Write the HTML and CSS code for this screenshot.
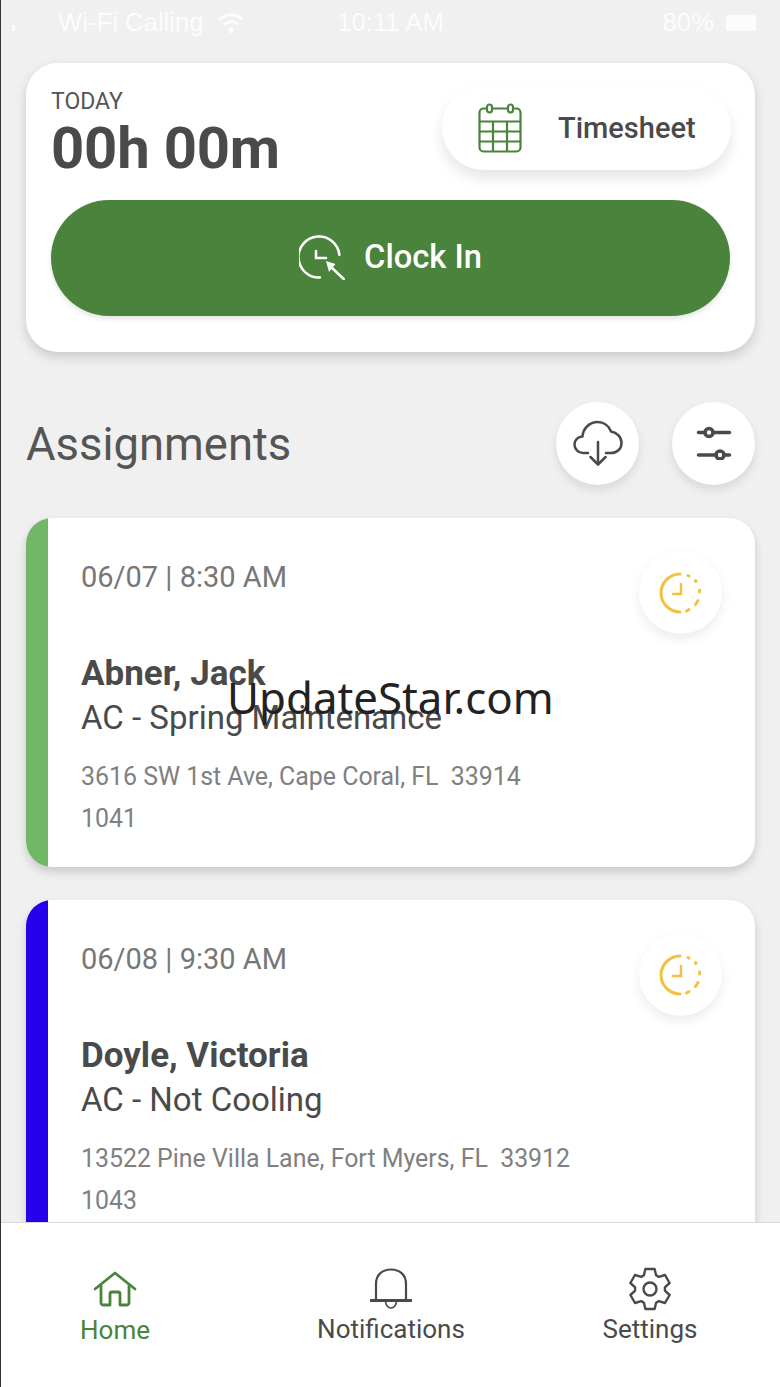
FILE: index.html
```html
<!DOCTYPE html>
<html lang="en">
<head>
<meta charset="utf-8">
<title>Assignments</title>
<link rel="stylesheet" href="styles.css">
</head>
<body>
<div class="app">
  <div class="status">
    <div class="status-left">
      <svg class="signal" width="34" height="12" viewBox="0 0 34 12"><rect x="0" y="6" width="3" height="6" fill="#fff"/></svg>
      <span class="carrier">Wi-Fi Calling</span>
      <svg class="wifi" width="30" height="24" viewBox="0 0 26 22" fill="none" stroke="#fff" stroke-width="2.600"><path d="M2 8 Q13 -1 24 8"/><path d="M6.500 12.500 Q13 7 19.500 12.500"/><path d="M13 21 L9.500 16.500 Q13 14 16.500 16.500 Z" fill="#fff" stroke="none"/></svg>
    </div>
    <span class="time">10:11 AM</span>
    <div class="status-right">
      <span>80%</span>
      <span class="battery"></span>
    </div>
  </div>

  <main class="content">
    <section class="today-card">
      <div class="today-top">
        <div class="today-text">
          <div class="today-label">TODAY</div>
          <div class="today-value">00h 00m</div>
        </div>
        <button class="timesheet">
          <svg width="44" height="50" viewBox="0 0 44 50" fill="none" stroke="#4a833c" stroke-width="2.200"><rect x="1.500" y="5.500" width="41" height="43" rx="4"/><path d="M1.500 18.500H42.500M1.500 28.500H42.500M1.500 38.500H42.500M15 18.500V48.500M29 18.500V48.500"/><rect x="9" y="1.500" width="5" height="8" rx="2.500" fill="#fff"/><rect x="30" y="1.500" width="5" height="8" rx="2.500" fill="#fff"/></svg>
          <span>Timesheet</span>
        </button>
      </div>
      <button class="clock-in">
        <svg width="46" height="46" viewBox="2 0 46 46" fill="none" stroke="#fff" stroke-width="2.500" stroke-linecap="round"><path d="M42.400 21A20.500 20.500 0 1 0 23 43.500"/><path d="M19 17V24H29"/><path d="M33 32L46.700 45"/><path d="M29 27L38.500 30L32 38Z" fill="#fff" stroke="none"/></svg>
        <span>Clock In</span>
      </button>
    </section>

    <div class="section-head">
      <h1>Assignments</h1>
      <div class="head-actions">
        <button class="round-btn">
          <svg width="50" height="46" viewBox="0 0 50 46" fill="none" stroke="#4a4a4a" stroke-width="2.500" stroke-linecap="round" stroke-linejoin="round"><path d="M15 33H10C5 33 1.500 29 1.500 24.500C1.500 20 5 16.500 9.500 16.500C10 8.500 16.500 2 24.500 2C31 2 36 6 38 11.500C44 12.500 48.500 17 48.500 23C48.500 29 44 33 38 33H33"/><path d="M25 22V44"/><path d="M17.500 37L25 44.500L32.500 37"/></svg>
        </button>
        <button class="round-btn">
          <svg width="36" height="34" viewBox="0 0 36 34" fill="none" stroke="#4a4a4a" stroke-width="3.600" stroke-linecap="round"><path d="M2.500 6.500H33.500M2.500 29H33.500" /><circle cx="13" cy="6.500" r="4" fill="#fff"/><circle cx="24" cy="29" r="4" fill="#fff"/></svg>
        </button>
      </div>
    </div>

    <article class="job job-green">
      <div class="job-bar"></div>
      <div class="job-body">
        <div class="job-date">06/07 | 8:30 AM</div>
        <div class="job-name">Abner, Jack</div>
        <div class="job-type">AC - Spring Maintenance</div>
        <div class="job-addr">3616 SW 1st Ave, Cape Coral, FL&nbsp; 33914</div>
        <div class="job-id">1041</div>
      </div>
      <button class="status-btn">
        <svg width="44" height="44" viewBox="0 0 44 44" fill="none" stroke="#f2c13f" stroke-width="3" stroke-linecap="round"><path d="M21 3A19 19 0 0 0 21 41"/><path d="M29 4.500L30 5M36.500 9.500L37 10.500M40.500 19V21M39 29.500L36.500 33.500M30 38.500L27.500 40"/><path d="M22 13V23H14" stroke-width="2.500"/></svg>
      </button>
    </article>

    <article class="job job-blue">
      <div class="job-bar"></div>
      <div class="job-body">
        <div class="job-date">06/08 | 9:30 AM</div>
        <div class="job-name">Doyle, Victoria</div>
        <div class="job-type">AC - Not Cooling</div>
        <div class="job-addr">13522 Pine Villa Lane, Fort Myers, FL&nbsp; 33912</div>
        <div class="job-id">1043</div>
      </div>
      <button class="status-btn">
        <svg width="44" height="44" viewBox="0 0 44 44" fill="none" stroke="#f2c13f" stroke-width="3" stroke-linecap="round"><path d="M21 3A19 19 0 0 0 21 41"/><path d="M29 4.500L30 5M36.500 9.500L37 10.500M40.500 19V21M39 29.500L36.500 33.500M30 38.500L27.500 40"/><path d="M22 13V23H14" stroke-width="2.500"/></svg>
      </button>
    </article>
  </main>

  <nav class="tabbar">
    <a class="tab tab-active">
      <svg width="44" height="36" viewBox="0 0 44 36" fill="none" stroke="#4a833c" stroke-width="2.800" stroke-linecap="round" stroke-linejoin="round"><path d="M2 18L22 2L42 18"/><path d="M8 15V32C8 33 9 34 10 34H17V23C17 21.500 18 21 19 21H25C26 21 27 21.500 27 23V34H34C35 34 36 33 36 32V15"/></svg>
      <span>Home</span>
    </a>
    <a class="tab">
      <svg width="42" height="42" viewBox="0 0 42 42" fill="none" stroke="#4a4a4a" stroke-width="2.200" stroke-linecap="round"><path d="M6 32V16C6 7 12 1.500 21 1.500C30 1.500 36 7 36 16V32"/><path d="M1 32.500H41" stroke-width="3"/><path d="M15.500 33C15.500 37 18 40 21 40C24 40 26.500 37 26.500 33" stroke-width="1.600"/></svg>
      <span>Notifications</span>
    </a>
    <a class="tab">
      <svg width="44" height="44" viewBox="0 0 44 44" fill="none" stroke="#4a4a4a" stroke-width="2.400" stroke-linejoin="round"><circle cx="22" cy="22" r="6.500"/><path d="M15.900 8.300L17.400 2H26.600L28.100 8.300L30.800 9.900L37 8L41.600 16L36.900 20.400V23.600L41.600 28L37 36L30.800 34.100L28.100 35.700L26.600 42H17.400L15.900 35.700L13.200 34.100L7 36L2.400 28L7.100 23.600V20.400L2.400 16L7 8L13.200 9.900Z"/></svg>
      <span>Settings</span>
    </a>
  </nav>

  <div class="watermark">UpdateStar.com</div>
</div>
</body>
</html>
```
FILE: styles.css
```css
* { box-sizing: border-box; }
html, body { margin: 0; padding: 0; }
body { width: 780px; height: 1387px; overflow: hidden; font-family: Roboto, sans-serif; color: #4a4a4a; }
button { font: inherit; color: inherit; border: 0; padding: 0; background: #fff; }

.app { position: relative; width: 780px; height: 1387px; background: #f0f0f0; border-left: 1px solid #333; overflow: hidden; display: flex; flex-direction: column; }

.status { flex: none; height: 45px; display: grid; grid-template-columns: 1fr auto 1fr; align-items: center; color: #fff; font-family: "Liberation Sans", sans-serif; font-size: 25.7px; opacity: .85; }
.status-left { display: flex; align-items: center; padding-left: 11px; }
.signal { margin-top: 4px; }
.carrier { margin-left: 12px; }
.wifi { margin-left: 12px; }
.status-right { display: flex; justify-content: flex-end; align-items: center; gap: 12px; padding-right: 24px; }
.battery { width: 30px; height: 16px; background: #fff; border-radius: 2px; }

.content { flex: 1; min-height: 0; padding: 18px 25px 0; overflow: hidden; display: flex; flex-direction: column; }

.today-card { flex: none; height: 289px; background: #fff; border-radius: 32px; box-shadow: 0 5px 12px rgba(0,0,0,.16); padding: 23px 24px 0 25px; }
.today-top { display: flex; justify-content: space-between; height: 114px; }
.today-text { padding-top: 4px; }
.today-label { font-size: 23px; line-height: 24px; color: #555; }
.today-value { font-size: 58px; font-weight: 700; line-height: 68px; color: #4a4a4a; letter-spacing: -.2px; }
.timesheet { width: 289px; height: 84px; border-radius: 42px; display: flex; align-items: center; box-shadow: 0 8px 14px rgba(0,0,0,.1); padding-left: 36px; font-size: 29px; font-weight: 500; gap: 36px; }
.clock-in { width: 679px; height: 116px; border-radius: 58px; background: #4a833c; color: #fff; display: flex; align-items: center; justify-content: center; gap: 19px; font-size: 32.7px; font-weight: 500; padding-bottom: 2px; box-shadow: 0 3px 5px rgba(0,0,0,.1); }

.section-head { flex: none; display: flex; justify-content: space-between; align-items: center; height: 84px; margin-top: 49px; }
.section-head h1 { margin: 0; font-size: 45.4px; font-weight: 400; color: #555; position: relative; top: 1px; }
.head-actions { display: flex; gap: 33px; }
.round-btn { width: 83px; height: 83px; border-radius: 50%; display: flex; align-items: center; justify-content: center; box-shadow: 0 5px 10px rgba(0,0,0,.1); }

.job { flex: none; position: relative; display: flex; height: 349px; background: #fff; border-radius: 26px; overflow: hidden; box-shadow: 0 5px 10px rgba(0,0,0,.16); }
.job-green { margin-top: 33px; }
.job-blue { margin-top: 33px; }
.job-bar { flex: none; width: 22px; }
.job-green .job-bar { background: #70b766; }
.job-blue .job-bar { background: #2600ea; }
.job-body { flex: 1; padding: 41px 0 0 33px; }
.job-date { font-size: 29px; line-height: 36px; color: #777; }
.job-name { margin-top: 59px; font-size: 35px; line-height: 40px; font-weight: 700; color: #4a4a4a; }
.job-type { font-size: 33px; line-height: 40px; margin-top: 4px; color: #4a4a4a; }
.job-addr { margin-top: 18px; font-size: 24.9px; line-height: 42px; color: #808080; }
.job-id { font-size: 24.9px; line-height: 42px; color: #808080; }
.status-btn { position: absolute; top: 33px; right: 33px; width: 83px; height: 83px; border-radius: 50%; display: flex; align-items: center; justify-content: center; box-shadow: 0 5px 12px rgba(0,0,0,.08); }

.tabbar { flex: none; height: 165px; background: #fff; border-top: 1px solid #d9d9d9; position: relative; display: grid; grid-template-columns: 228px 324px 194px 1fr; }
.tab { display: flex; flex-direction: column; align-items: center; padding-top: 44px; font-size: 26px; color: #4a4a4a; }
.tab svg { height: 44px; }
.tab span { margin-top: 2px; line-height: 32px; }
.tab-active { color: #4a833c; }
.tab-active span { margin-top: 3px; }

.watermark { position: absolute; left: 226px; top: 668px; font-family: "Noto Sans", sans-serif; font-size: 43.8px; line-height: 58px; color: #222; white-space: nowrap; }
```
